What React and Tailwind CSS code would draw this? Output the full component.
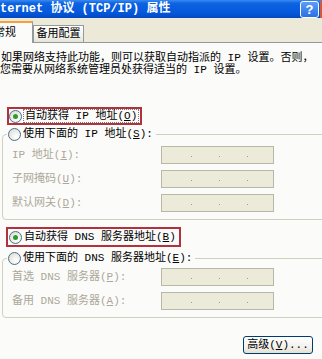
import React from "react";

function Radio({ checked }) {
  return (
    <span className="w-[13px] h-[13px] shrink-0 rounded-full border border-[#4a6e8c] bg-[radial-gradient(circle_at_65%_70%,#ffffff_0%,#f1f1ec_40%,#d8d8cf_100%)] flex items-center justify-center">
      {checked && <span className="w-[5px] h-[5px] rounded-full bg-[#2f9a2f]" />}
    </span>
  );
}

function U({ children }) {
  return <span className="underline underline-offset-1">{children}</span>;
}

function IpBox() {
  return (
    <div className="w-[113px] h-[18px] border border-[#b9b7a9] bg-[#ecead9] flex items-end pb-[6px] pl-[29px] gap-[27px]">
      <span className="w-[1px] h-[1px] bg-[#9c9a8e]" />
      <span className="w-[1px] h-[1px] bg-[#9c9a8e]" />
      <span className="w-[1px] h-[1px] bg-[#9c9a8e]" />
    </div>
  );
}

function Row({ label }) {
  return (
    <div className="flex items-center h-[18px]">
      <div className="w-[158px] pl-[9px] text-[#aca899] whitespace-nowrap leading-[14px]">{label}</div>
      <IpBox />
    </div>
  );
}

export default function App() {
  return (
    <div className="w-[322px] h-[359px] overflow-hidden bg-[#ece9d8] flex flex-col text-[11px] text-black font-['Liberation_Mono','Noto_Sans_CJK_SC',monospace]">
      {/* Title bar */}
      <div className="h-[18px] shrink-0 flex items-center bg-[linear-gradient(180deg,#3a8af2_0%,#0d63e0_18%,#0558dc_70%,#0448c0_100%)]">
        <span className="text-white font-bold text-[12px] leading-[14px] whitespace-nowrap">
          ternet 协议 (TCP/IP) 属性
        </span>
        <div className="ml-auto h-[17px] w-[19px] rounded-[3px] border border-white bg-[linear-gradient(180deg,#5d9df7,#2a6fe6)] flex items-center justify-center text-white font-bold text-[13px] leading-none font-['Liberation_Sans',sans-serif]">
          ?
        </div>
        <div className="ml-[1px] h-[17px] w-[2px] bg-[#d8573c]" />
      </div>

      {/* Tabs */}
      <div className="h-[24px] shrink-0 flex items-end">
        <div className="relative z-10 -mb-px h-[22px] w-[33px] bg-[#fbfbf9] border-t-2 border-[#f3a23a] border-r border-r-[#919b9c] flex items-center overflow-hidden">
          <span className="-ml-[6px] whitespace-nowrap leading-[14px]">常规</span>
        </div>
        <div className="h-[17px] w-[51px] border border-b-0 border-[#919b9c] bg-[linear-gradient(180deg,#ffffff,#f0efe8_70%,#e6e4d8)] flex items-center justify-center">
          <span className="whitespace-nowrap leading-[14px]">备用配置</span>
        </div>
      </div>

      {/* Panel */}
      <div className="flex-1 flex flex-col bg-[#fbfbf9] border-t border-[#919b9c] pt-[9px]">
        <div className="pl-[1px] leading-[12px] whitespace-nowrap">
          <div>如果网络支持此功能，则可以获取自动指派的 IP 设置。否则，</div>
          <div className="-ml-[1px]">您需要从网络系统管理员处获得适当的 IP 设置。</div>
        </div>

        {/* Radio 1 */}
        <div className="mt-[31px] ml-[7px] w-fit h-[18px] pr-[1px] border-2 border-[#b1323c] flex items-center gap-[1px]">
          <Radio checked />
          <span className="border border-dotted border-[#7a7a7a] leading-[12px] px-[1px] whitespace-nowrap">
            自动获得 IP 地址(<U>O</U>)
          </span>
        </div>

        {/* Group 1 */}
        <fieldset className="mt-[2px] ml-[2px] w-[340px] border border-[#d0d0bf] rounded-[4px] pb-[7px]">
          <legend className="ml-[4px] pl-[1px] pr-[3px] h-[14px] flex items-center gap-[2px]">
            <Radio />
            <span className="whitespace-nowrap leading-[14px]">使用下面的 IP 地址(<U>S</U>):</span>
          </legend>
          <div className="pt-[5px] flex flex-col gap-[6px]">
            <Row label={<>IP 地址(<U>I</U>):</>} />
            <Row label={<>子网掩码(<U>U</U>):</>} />
            <Row label={<>默认网关(<U>D</U>):</>} />
          </div>
        </fieldset>

        {/* Radio 3 */}
        <div className="mt-[7px] ml-[6px] w-fit h-[20px] pr-[2px] border-2 border-[#b1323c] flex items-center gap-[1px] pl-[1px]">
          <Radio checked />
          <span className="leading-[14px] px-[1px] whitespace-nowrap">
            自动获得 DNS 服务器地址(<U>B</U>)
          </span>
        </div>

        {/* Group 2 */}
        <fieldset className="mt-[4px] ml-[2px] w-[340px] border border-[#d0d0bf] rounded-[4px] pb-[7px]">
          <legend className="ml-[4px] pl-[1px] pr-[3px] h-[14px] flex items-center gap-[2px]">
            <Radio />
            <span className="whitespace-nowrap leading-[14px]">使用下面的 DNS 服务器地址(<U>E</U>):</span>
          </legend>
          <div className="pt-[3px] flex flex-col gap-[6px]">
            <Row label={<>首选 DNS 服务器(<U>P</U>):</>} />
            <Row label={<>备用 DNS 服务器(<U>A</U>):</>} />
          </div>
        </fieldset>

        {/* Button */}
        <div className="mt-[18px] flex justify-end pr-[9px]">
          <div className="w-[70px] h-[18px] rounded-[3px] border border-[#003c74] bg-[linear-gradient(180deg,#ffffff,#f3f2ec_60%,#e3e1d4)] flex items-center justify-center whitespace-nowrap leading-[14px]">
            高级(<U>V</U>)...
          </div>
        </div>
      </div>
    </div>
  );
}
